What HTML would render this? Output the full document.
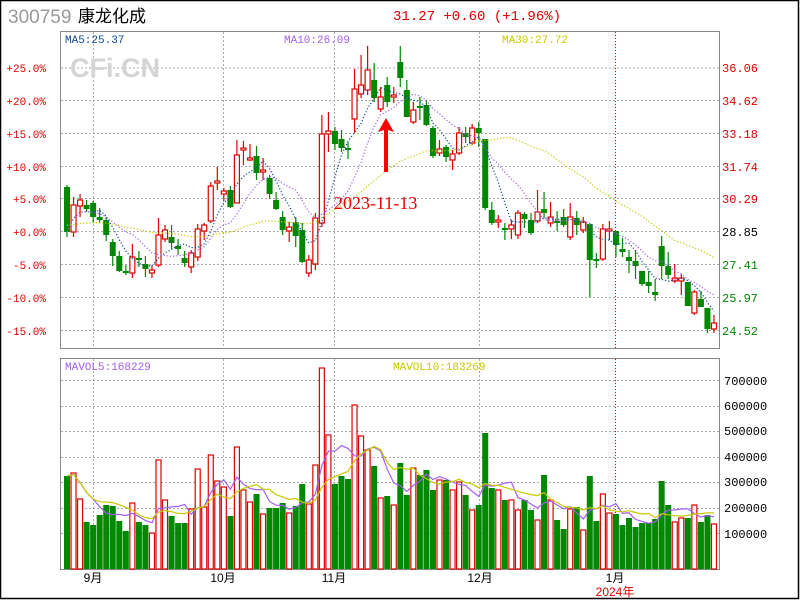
<!DOCTYPE html>
<html><head><meta charset="utf-8"><style>
html,body{margin:0;padding:0;background:#fff;}
body{width:800px;height:600px;overflow:hidden;position:relative;}
svg{position:absolute;left:0;top:0;}
</style></head><body>
<svg id="s" width="800" height="600" xmlns="http://www.w3.org/2000/svg" font-family="Liberation Mono, monospace">
<rect x="0.5" y="0.5" width="798" height="598" fill="#fff" stroke="#000" stroke-width="1.5"/>
<text x="8" y="23" font-family="Liberation Sans, sans-serif" font-size="19" fill="#999">300759</text>
<text x="78" y="22" font-family="Liberation Sans, 'Noto Sans CJK SC', sans-serif" font-size="17" fill="#000">康龙化成</text>
<text x="393" y="20" font-size="14" fill="#d00">31.27 +0.60 (+1.96%)</text>
<g id="grid" stroke="#aaa" stroke-dasharray="2,2" stroke-width="1"></g>
<rect x="60.5" y="31.5" width="659" height="317" fill="none" stroke="#888"/>
<rect x="60.5" y="358.5" width="659" height="211" fill="none" stroke="#888"/>
<line x1="615.5" y1="32" x2="615.5" y2="348" stroke="#d00" stroke-dasharray="1,2"/>
<line x1="615.5" y1="359" x2="615.5" y2="569" stroke="#d00" stroke-dasharray="1,2"/>
<text x="70" y="77" font-family="Liberation Sans, sans-serif" font-weight="bold" font-size="27" fill="#d4d4d4">CFi.CN</text>
<text x="65" y="43" font-size="11" fill="#0a4a9a">MA5:25.37</text>
<text x="284" y="43" font-size="11" fill="#a35ef0">MA10:26.09</text>
<text x="502" y="43" font-size="11" fill="#c8c800">MA30:27.72</text>
<text x="65" y="370" font-size="11" fill="#a35ef0">MAVOL5:168229</text>
<text x="393" y="370" font-size="11" fill="#c8c800">MAVOL10:183269</text>
<g font-size="11" fill="#d00" text-anchor="end">
<text x="46" y="72">+25.0%</text><text x="46" y="105">+20.0%</text><text x="46" y="138">+15.0%</text><text x="46" y="171">+10.0%</text><text x="46" y="203">+5.0%</text><text x="46" y="236">+0.0%</text><text x="46" y="269">-5.0%</text><text x="46" y="302">-10.0%</text><text x="46" y="335">-15.0%</text>
</g>
<g font-size="12">
<text x="722" y="72" fill="#d00">36.06</text><text x="722" y="105" fill="#d00">34.62</text><text x="722" y="138" fill="#d00">33.18</text><text x="722" y="171" fill="#d00">31.74</text><text x="722" y="203" fill="#d00">30.29</text><text x="722" y="236" fill="#000">28.85</text><text x="722" y="269" fill="#080">27.41</text><text x="722" y="302" fill="#080">25.97</text><text x="722" y="335" fill="#080">24.52</text>
</g>
<g font-size="12" fill="#000">
<text x="724" y="385">700000</text><text x="724" y="410">600000</text><text x="724" y="435">500000</text><text x="724" y="461">400000</text><text x="724" y="486">300000</text><text x="724" y="512">200000</text><text x="724" y="538">100000</text>
</g>
<g font-family="Liberation Sans, 'Noto Sans CJK SC', sans-serif" font-size="12" fill="#000" text-anchor="middle">
<text x="93" y="582">9月</text><text x="223" y="582">10月</text><text x="334" y="582">11月</text><text x="480" y="582">12月</text><text x="615" y="582">1月</text>
<text x="615" y="596" fill="#d00">2024年</text>
</g>
<g id="vol"></g><g id="cdl"></g><g id="ma"></g>
<text x="334" y="209" font-family="Liberation Serif, serif" font-size="18" fill="#e00">2023-11-13</text>
<polygon points="386,118 378,132 384,130 384,172 388,172 388,130 394,132" fill="#f00"/>
</svg>
<script>
var NS="http://www.w3.org/2000/svg";
function el(p,t,a){var e=document.createElementNS(NS,t);for(var k in a)e.setAttribute(k,a[k]);p.appendChild(e);return e;}
var g=document.getElementById('grid');
[68,100.5,133.5,166.5,198.5,231.5,264.5,297.5,330.5].forEach(function(y){el(g,'line',{x1:61,x2:719,y1:y,y2:y});});
[380.5,406.5,431.5,457.5,482.5,508.5,533.5].forEach(function(y){el(g,'line',{x1:61,x2:719,y1:y,y2:y});});
[93.5,223.5,334.5,479.5].forEach(function(x){el(g,'line',{x1:x,x2:x,y1:32,y2:348});el(g,'line',{x1:x,x2:x,y1:359,y2:569});});
var D=[
['g',187,232,185,237],['r',205,232,197,237],['r',200,206,194,217],['g',205,209,200,212],['g',203,217,201,223],
['g',217,220,208,223],['g',220,235,217,241],['g',242,256,239,266],['g',256,271,251,272],['g',271,273,265,275],
['r',257,273,244,278],['g',258,260,251,267],['g',264,269,256,277],['r',270,273,265,278],['r',235,265,218,267],
['r',230,239,225,242],['g',237,243,225,249],['g',246,249,239,255],['g',258,263,251,267],['r',253,267,250,273],
['r',229,257,224,261],['r',225,231,223,240],['r',186,221,182,223],['r',181,183,167,190],['r',191,194,188,201],
['g',190,207,186,208],['r',155,203,140,203],['r',148,150,141,165],['r',158,160,144,161],['g',156,173,146,180],
['r',170,172,158,180],['g',178,194,175,199],['g',200,209,192,210],['g',217,230,211,235],['r',227,231,222,242],
['g',222,236,217,247],['g',230,262,223,263],['r',260,273,255,277],['r',218,264,213,270],['r',134,223,115,227],
['r',131,134,112,152],['g',131,144,127,150],['g',139,148,130,152],['g',148,150,142,159],['r',89,119,69,133],
['r',85,94,55,98],['r',70,90,46,95],['g',80,98,63,102],['r',97,109,87,112],['g',85,102,77,107],
['r',95,97,87,103],['g',62,78,46,87],['g',90,117,80,117],['r',110,122,102,124],['g',106,108,97,120],
['g',105,125,100,126],['g',128,156,126,158],['r',149,153,140,156],['g',147,157,145,162],['r',154,160,150,170],
['r',133,153,127,155],['g',133,137,127,143],['r',128,143,124,145],['g',128,133,122,147],['g',139,208,139,210],
['g',210,223,202,225],['r',220,222,215,228],['g',228,230,223,240],['r',225,229,220,239],['r',213,235,210,239],
['g',214,219,212,228],['g',220,233,213,235],['r',212,221,190,223],['g',209,213,192,218],['r',217,223,202,227],
['g',221,223,211,231],['g',217,225,209,227],['r',217,237,203,240],['g',218,225,211,235],['r',222,230,217,233],
['g',224,260,223,297],['g',259,261,253,268],['r',229,259,224,261],['r',229,231,221,240],['g',231,245,231,257],
['g',249,252,238,257],['g',257,261,250,273],['g',261,266,250,279],['g',271,284,271,286],['g',282,286,271,293],
['g',292,295,279,301],['g',246,266,236,279],['g',266,275,252,279],['r',278,281,264,283],['r',278,281,274,295],
['g',282,306,282,306],['r',292,313,290,315],['g',299,307,291,307],['g',308,329,308,333],['r',323,329,315,333]];
var V=[476,473,499,522,525,515,505,506,521,531,503,522,525,533,460,500,516,523,523,509,469,507,455,481,487,516,447,490,502,494,514,508,508,503,513,506,484,504,465,368,435,484,476,479,405,436,450,466,498,496,505,463,468,475,470,490,480,480,490,482,495,510,505,433,488,490,500,500,510,500,510,520,475,500,520,529,509,507,530,476,521,494,513,514,525,518,527,523,523,519,481,505,522,518,518,505,522,515,524];
while(V.length<100)V.splice(52,0,495);
var cd=document.getElementById('cdl'),vg=document.getElementById('vol'),mg=document.getElementById('ma');
var RED='#d00',GRN='#080';
function X(i){return 67+6.535*i;}
var close=[];
D.forEach(function(d,i){
  var x=X(i),c=d[0]=='r'?RED:GRN,t=d[1],b=d[2];if(b-t<1.5){b=t+2;}
  close.push(d[0]=='r'?d[1]:d[2]);
  el(cd,'line',{x1:x,x2:x,y1:d[3],y2:d[4],stroke:c,'stroke-width':1.2});
  if(d[0]=='r')el(cd,'rect',{x:x-2.5,y:t,width:5,height:b-t,fill:'#fff',stroke:c,'stroke-width':1.2});
  else el(cd,'rect',{x:x-3,y:t,width:6,height:b-t,fill:c});
  var vt=V[i];
  if(d[0]=='r')el(vg,'rect',{x:x-2.5,y:vt,width:5,height:569-vt,fill:'#fff',stroke:RED,'stroke-width':1.2});
  else el(vg,'rect',{x:x-3,y:vt,width:6,height:569-vt,fill:GRN});
});
function ma(arr,n,col,dash,parent){
  var pts=[];for(var i=0;i<arr.length;i++){var k=Math.min(n,i+1);var s=0;for(var j=i-k+1;j<=i;j++)s+=arr[j];pts.push(X(i).toFixed(1)+','+(s/k).toFixed(1));}
  var a={points:pts.join(' '),fill:'none',stroke:col,'stroke-width':1.2};if(dash)a['stroke-dasharray']=dash;el(parent,'polyline',a);
}
ma(close,5,'#0a4a9a','1.2,2',mg);
ma(close,10,'#a35ef0','1.2,2',mg);
var pre=[];for(var i=0;i<29;i++)pre.push(225);
var arr30=pre.concat(close),p30=[];
for(var i=0;i<close.length;i++){var s=0;for(var j=i;j<i+30;j++)s+=arr30[j];p30.push(X(i).toFixed(1)+','+(s/30).toFixed(1));}
el(mg,'polyline',{points:p30.join(' '),fill:'none',stroke:'#c8c800','stroke-width':1.2,'stroke-dasharray':'1.2,2'});
ma(V,5,'#a35ef0',null,vg);
ma(V,10,'#c8c800',null,vg);
</script>
</body></html>
